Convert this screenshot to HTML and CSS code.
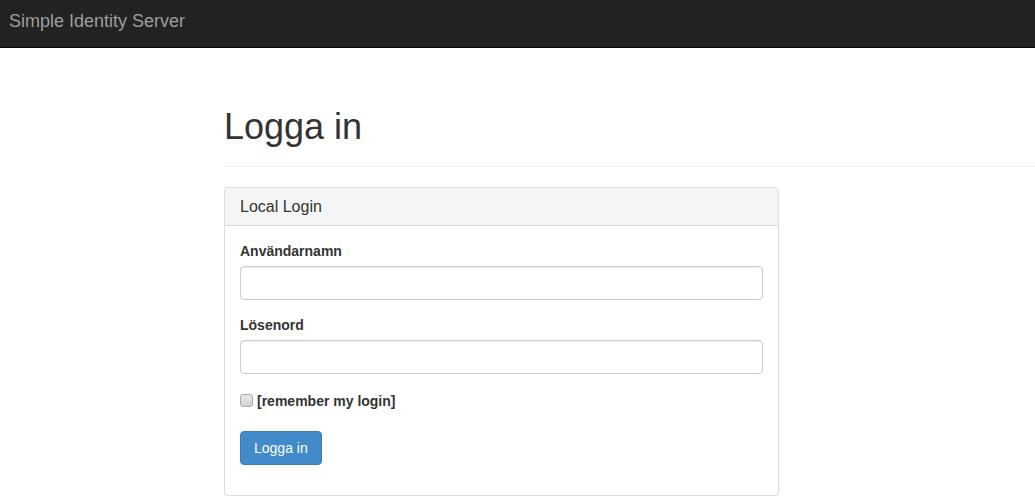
FILE: index.html
```html
<!DOCTYPE html>
<html lang="sv">
<head>
<meta charset="utf-8">
<title>Logga in</title>
<link rel="stylesheet" href="styles.css">
</head>
<body>
<nav class="navbar">
  <a class="brand" href="#">Simple Identity Server</a>
</nav>
<main class="content">
  <div class="page-header">
    <h1>Logga in</h1>
  </div>
  <div class="panel">
    <div class="panel-heading">
      <h3 class="panel-title">Local Login</h3>
    </div>
    <div class="panel-body">
      <form class="login-form">
        <div class="form-group">
          <label class="field-label" for="username">Användarnamn</label>
          <input class="form-control" id="username" type="text">
        </div>
        <div class="form-group">
          <label class="field-label" for="password">Lösenord</label>
          <input class="form-control" id="password" type="password">
        </div>
        <div class="checkbox">
          <label class="check-label"><input type="checkbox" class="check-input"> [remember my login]</label>
        </div>
        <div class="form-group">
          <button class="btn-primary" type="button">Logga in</button>
        </div>
      </form>
    </div>
  </div>
</main>
</body>
</html>
```

FILE: styles.css
```css
* { box-sizing: border-box; }
html, body { margin: 0; padding: 0; }
body {
  font-family: "Liberation Sans", Arial, Helvetica, sans-serif;
  font-size: 14px;
  line-height: 20px;
  color: #333;
  background: #fff;
}
.navbar {
  height: 48px;
  background: #222;
  border-bottom: 1px solid #080808;
  display: flex;
  align-items: center;
}
.brand {
  color: #9d9d9d;
  font-size: 18px;
  line-height: 20px;
  text-decoration: none;
  padding: 0 9px;
  margin-top: -5px;
}
.content {
  margin-left: 224px;
  padding-top: 59px;
}
.page-header {
  margin: 0 0 20px;
  padding-bottom: 9px;
  border-bottom: 1px solid #eee;
}
.page-header h1 {
  margin: 0 0 10px;
  font-size: 36px;
  font-weight: 500;
  line-height: 1.1;
  font-family: "Liberation Sans", Arial, sans-serif;
}
.panel {
  width: 555px;
  border: 1px solid #ddd;
  border-radius: 4px;
  background: #fff;
  box-shadow: 0 1px 1px rgba(0,0,0,0.05);
}
.panel-heading {
  background: #f5f5f5;
  border-bottom: 1px solid #ddd;
  border-radius: 3px 3px 0 0;
  padding: 10px 15px;
}
.panel-title {
  margin: 0;
  font-size: 16px;
  font-weight: 500;
  line-height: 1.1;
}
.panel-body {
  padding: 15px;
}
.login-form { margin: 0; }
.form-group {
  margin-bottom: 15px;
}
.field-label {
  display: block;
  font-weight: bold;
  margin-bottom: 5px;
}
.form-control {
  display: block;
  width: 100%;
  height: 34px;
  padding: 6px 12px;
  font-size: 14px;
  border: 1px solid #ccc;
  border-radius: 4px;
  box-shadow: inset 0 1px 1px rgba(0,0,0,0.075);
  font-family: inherit;
}
.checkbox {
  margin: 17px 0 20px;
}
.check-label {
  display: block;
  padding-left: 17px;
  font-weight: bold;
  position: relative;
}
.check-input {
  position: absolute;
  left: 0;
  top: 3px;
  margin: 0;
  width: 13px;
  height: 13px;
  -webkit-appearance: none;
  appearance: none;
  border: 1px solid #a9a9a9;
  border-radius: 3px;
  background: linear-gradient(#e6e6e6, #d4d4d4);
}
.btn-primary {
  font-family: inherit;
  font-size: 14px;
  line-height: 20px;
  padding: 6px 13px;
  color: #fff;
  background: #428bca;
  border: 1px solid #357ebd;
  border-radius: 4px;
  cursor: pointer;
}
```
